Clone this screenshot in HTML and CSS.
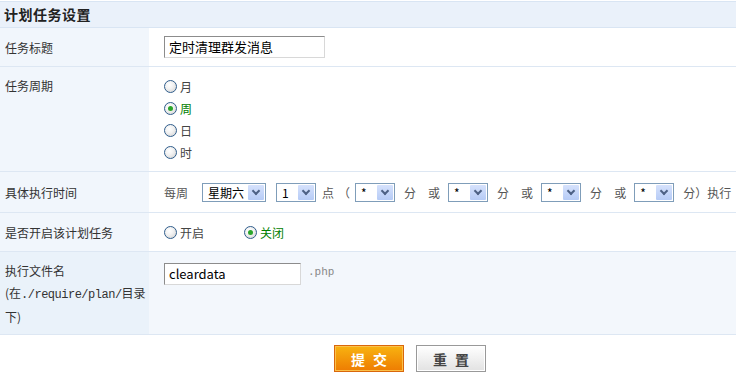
FILE: index.html
```html
<!DOCTYPE html>
<html lang="zh">

<head>
  <meta charset="UTF-8" />
  <title>计划任务设置</title>
  <link rel="stylesheet" href="styles.css">
</head>

<body>
  <div class="panel">
    <div class="panel-title">计划任务设置</div>

    <div class="row row-title">
      <div class="label">任务标题</div>
      <div class="field"><span class="text-input w160">定时清理群发消息</span></div>
    </div>

    <div class="row row-cycle">
      <div class="label">任务周期</div>
      <div class="field radio-list">
        <label class="radio"><span class="dot"></span>月</label>
        <label class="radio on"><span class="dot"></span>周</label>
        <label class="radio"><span class="dot"></span>日</label>
        <label class="radio"><span class="dot"></span>时</label>
      </div>
    </div>

    <div class="row row-time">
      <div class="label">具体执行时间</div>
      <div class="field time-line">
        <span class="t">每周</span>
        <span class="sel s-week">星期六<i class="arrow"></i></span>
        <span class="sel s-hour">1<i class="arrow"></i></span>
        <span class="t t-dian">点</span>
        <span class="t t-paren">（</span>
        <span class="sel s-min first">*<i class="arrow"></i></span>
        <span class="t t-fen">分</span>
        <span class="t t-or">或</span>
        <span class="sel s-min">*<i class="arrow"></i></span>
        <span class="t t-fen">分</span>
        <span class="t t-or">或</span>
        <span class="sel s-min">*<i class="arrow"></i></span>
        <span class="t t-fen">分</span>
        <span class="t t-or">或</span>
        <span class="sel s-min">*<i class="arrow"></i></span>
        <span class="t t-fen">分）执行</span>
      </div>
    </div>

    <div class="row row-open">
      <div class="label">是否开启该计划任务</div>
      <div class="field inline-radios">
        <label class="radio"><span class="dot"></span>开启</label>
        <label class="radio on"><span class="dot"></span>关闭</label>
      </div>
    </div>

    <div class="row row-file">
      <div class="label">执行文件名<br>(在<span class="mono">./require/plan/</span>目录<br>下)</div>
      <div class="field">
        <span class="text-input w136">cleardata</span>
        <span class="ext">.php</span>
      </div>
    </div>

    <div class="actions">
      <button class="btn btn-submit" type="button">提交</button>
      <button class="btn btn-reset" type="button">重置</button>
    </div>
  </div>
</body>

</html>
```

FILE: styles.css
```css
body {
  margin: 0;
  padding-top: 1px;
  font-family: "Noto Sans CJK SC", "DejaVu Sans", sans-serif;
  font-size: 12px;
  color: #333;
  background: #fff;
}

.panel {
  width: 736px;
}

.panel-title {
  height: 25px;
  line-height: 25px;
  padding-left: 4px;
  background: #eaf1fa;
  border-top: 1px solid #d9e5f3;
  border-bottom: 1px solid #d9e5f3;
  font-size: 14px;
  font-weight: bold;
  color: #222;
  letter-spacing: 0.5px;
}

.row {
  display: grid;
  grid-template-columns: 149px 1fr;
  border-bottom: 1px solid #dde7f3;
}

.label {
  background: #f1f6fc;
  padding-left: 5px;
  display: flex;
  align-items: center;
}

.field {
  padding-left: 15px;
  display: flex;
  align-items: center;
}

.row-title { height: 38px; }
.row-time { height: 40px; }
.row-open { height: 38px; }

.row-cycle .label,
.row-file .label {
  display: block;
  padding-top: 8px;
  line-height: 22px;
}

.mono {
  font-family: "Liberation Mono", monospace;
  font-size: 12px;
  letter-spacing: -0.5px;
}

.radio-list {
  flex-direction: column;
  align-items: flex-start;
  padding-top: 8px;
  padding-bottom: 8px;
}

.radio {
  display: flex;
  align-items: center;
  height: 22px;
  color: #444;
}

.radio.on {
  color: #008000;
}

.dot {
  width: 11px;
  height: 11px;
  border: 1px solid #2f5d8c;
  border-radius: 50%;
  background: radial-gradient(circle at 40% 35%, #fff 0%, #f2f2f2 40%, #cfcfcf 100%);
  margin-right: 3px;
  position: relative;
}

.radio.on .dot::after {
  content: "";
  position: absolute;
  left: 3px;
  top: 3px;
  width: 5px;
  height: 5px;
  border-radius: 50%;
  background: #2aa52a;
}

.inline-radios .radio + .radio {
  margin-left: 40px;
}

.text-input {
  display: inline-block;
  box-sizing: border-box;
  height: 22px;
  line-height: 20px;
  padding-left: 4px;
  border: 1px solid #a5acb5;
  border-top-color: #8c8c8c;
  border-left-color: #8c8c8c;
  border-right-color: #d8d8d8;
  border-bottom-color: #d8d8d8;
  background: #fff;
  color: #000;
  font-size: 13px;
}

.w160 { width: 161px; }
.w136 { width: 137px; }

.row-file {
  height: 82px;
}

.row-file .label {
  background: #eaf2fa;
  color: #333;
}

.row-file .field {
  background: #f3f7fc;
  align-items: flex-start;
  padding-top: 11px;
}

.ext {
  margin-left: 7px;
  margin-top: 3px;
  font-family: "Liberation Mono", monospace;
  font-size: 11px;
  color: #888;
}

.time-line .t {
  color: #555;
  white-space: nowrap;
}

.sel {
  position: relative;
  display: inline-block;
  box-sizing: border-box;
  height: 19px;
  line-height: 17px;
  padding-left: 5px;
  border: 1px solid #7f9db9;
  background: #fff;
  color: #000;
  font-size: 12px;
}

.arrow {
  position: absolute;
  right: 1px;
  top: 1px;
  width: 16px;
  height: 15px;
  border-radius: 1px;
  background: linear-gradient(#d6e2fc, #b6cbf6);
}

.arrow::after {
  content: "";
  position: absolute;
  left: 5px;
  top: 3px;
  width: 4px;
  height: 4px;
  border-right: 2px solid #4d6185;
  border-bottom: 2px solid #4d6185;
  transform: rotate(45deg);
}

.s-week { width: 64px; margin-left: 14px; }
.s-hour { width: 40px; margin-left: 10px; }
.s-min { width: 40px; margin-left: 8px; }
.s-min.first { margin-left: 5px; }
.t-dian { margin-left: 6px; }
.t-paren { margin-left: 4px; }
.t-fen { margin-left: 9px; }
.t-or { margin-left: 12px; }

.actions {
  padding: 10px 0 0 334px;
  display: flex;
  gap: 12px;
}

.btn {
  width: 70px;
  height: 27px;
  font-family: "Noto Sans CJK SC", sans-serif;
  font-size: 14px;
  font-weight: bold;
  letter-spacing: 8px;
  text-indent: 8px;
  cursor: pointer;
  padding: 0;
}

.btn-submit {
  color: #fff;
  border: 1px solid #d9670b;
  background: linear-gradient(#f8b310, #ee7c02);
  box-shadow: inset 0 0 0 1px #fbc04a;
}

.btn-reset {
  color: #444;
  border: 1px solid #999;
  background: linear-gradient(#ffffff, #e2e2e2);
  box-shadow: inset 0 0 0 1px #fff;
}
```
